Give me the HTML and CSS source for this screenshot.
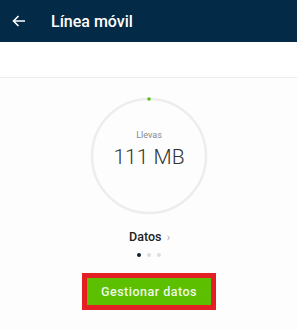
FILE: index.html
```html
<!DOCTYPE html>
<html>
  <head>
    <meta charset="utf-8">
    <title>Línea móvil</title>
    <link rel="stylesheet" href="styles.css">
  </head>
  <body>
    <div class="topbar">
      <svg class="back" width="14" height="12" viewBox="0 0 14 12">
        <path d="M13 6H1.5M6.5 1L1.5 6l5 5" fill="none" stroke="#fff" stroke-width="1.6"/>
      </svg>
      <span class="title">Línea móvil</span>
    </div>
    <div class="tabs"></div>
    <div class="content">
      <div class="gauge">
        <svg width="120" height="120" viewBox="0 0 120 120">
          <circle cx="60" cy="60" r="57" fill="none" stroke="#ededed" stroke-width="2.5"/>
          <circle cx="60" cy="3" r="1.8" fill="#5bbf1a"/>
        </svg>
        <div class="gauge-text">
          <span class="label">Llevas</span>
          <span class="value">111 MB</span>
        </div>
      </div>
      <div class="section">Datos <span class="chev">&#8250;</span></div>
      <div class="dots">
        <span class="dot active"></span>
        <span class="dot"></span>
        <span class="dot"></span>
      </div>
      <div class="btn-frame">
        <button class="btn">Gestionar datos</button>
      </div>
    </div>
  </body>
</html>
```

FILE: styles.css
```css
body {
  margin: 0;
  font-family: Roboto, "Liberation Sans", sans-serif;
  background: #fdfdfd;
}
.topbar {
  height: 42px;
  background: #032a46;
  display: flex;
  align-items: center;
  padding-left: 12px;
}
.back {
  margin-right: 25px;
}
.title {
  color: #fff;
  font-size: 16px;
  font-weight: 500;
}
.tabs {
  height: 35px;
  background: #fff;
  border-bottom: 1px solid #ececec;
}
.content {
  display: flex;
  flex-direction: column;
  align-items: center;
}
.gauge {
  display: grid;
  margin-top: 18px;
  margin-left: 1px;
}
.gauge svg,
.gauge-text {
  grid-area: 1 / 1;
}
.gauge-text {
  display: flex;
  flex-direction: column;
  align-items: center;
  padding-top: 34px;
}
.label {
  font-size: 9px;
  color: #888;
}
.value {
  font-size: 21px;
  font-weight: 300;
  color: #333;
  margin-top: 5px;
}
.section {
  margin-top: 13px;
  margin-left: 2px;
  font-size: 12.5px;
  font-weight: 500;
  color: #222;
}
.chev {
  color: #aaa;
  font-weight: 400;
  font-size: 11px;
  margin-left: 2px;
}
.dots {
  display: flex;
  gap: 6px;
  margin-top: 9px;
}
.dot {
  width: 4px;
  height: 4px;
  border-radius: 50%;
  background: #dcdcdc;
}
.dot.active {
  background: #0a2238;
}
.btn-frame {
  margin-top: 16px;
  border: 5px solid #e31e25;
  margin-left: 1px;
}
.btn {
  display: block;
  width: 124px;
  height: 27px;
  border: none;
  background: #5cbf00;
  color: #eef8e6;
  font-family: inherit;
  font-size: 12.5px;
  font-weight: 500;
  letter-spacing: 0.5px;
  padding: 0;
}
```
